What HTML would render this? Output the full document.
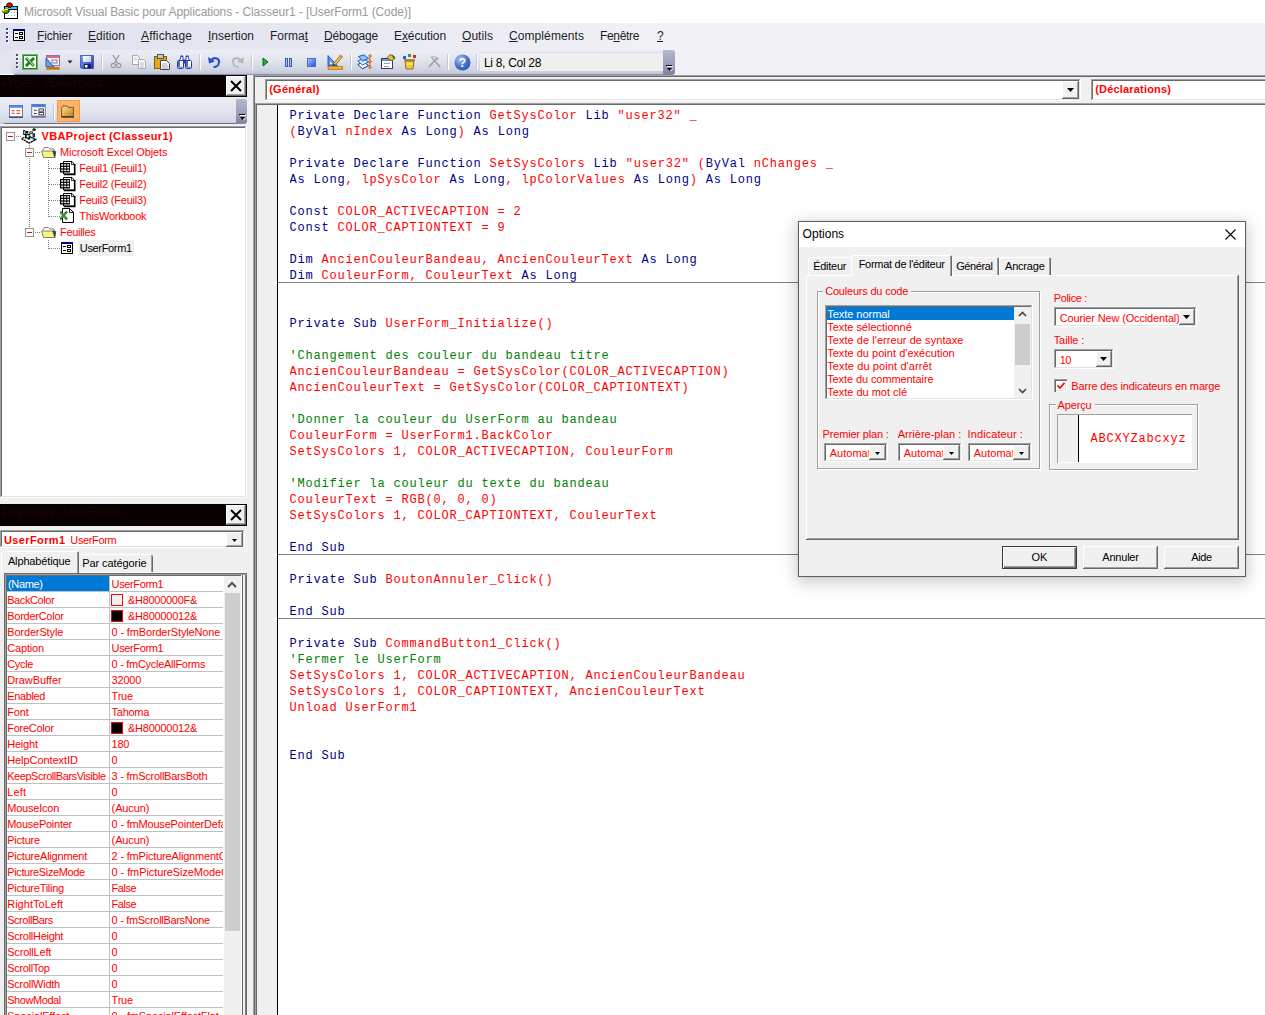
<!DOCTYPE html>
<html><head><meta charset="utf-8"><title>VBA</title>
<style>
html,body{margin:0;padding:0;background:#fff;}
body{width:1265px;height:1015px;overflow:hidden;position:relative;font-family:"Liberation Sans",sans-serif;}
div,svg,span.t{position:absolute;}
span.t{white-space:pre;}
u{text-decoration:underline;text-underline-offset:1px;}
.code{font-family:"Liberation Mono",monospace;font-size:12px;letter-spacing:0.8px;color:#f00;overflow:hidden;}
.cl{left:0;height:16px;line-height:16px;white-space:pre;}
.k{color:#000080}.g{color:#008000}
</style></head>
<body>
<div style="left:0px;top:0px;width:1265px;height:23px;background:#fff;"></div>
<span class="t" style="letter-spacing:-0.095px;left:24px;top:6.14px;font-size:12px;line-height:12px;color:#999;">Microsoft Visual Basic pour Applications - Classeur1 - [UserForm1 (Code)]</span>
<svg style="left:0px;top:0px" width="20" height="20" viewBox="0 0 20 20">
<rect x="4.500" y="6.500" width="13" height="12" fill="#fff" stroke="#000"/>
<rect x="5" y="6" width="12" height="1" fill="#0000a0"/>
<rect x="5" y="7" width="12" height="2" fill="#30d4e8"/>
<rect x="5" y="9" width="12" height="1" fill="#000"/>
<g fill="#b0b0b0"><rect x="11" y="12" width="1" height="1"/><rect x="14" y="12" width="1" height="1"/><rect x="8" y="15" width="1" height="1"/><rect x="11" y="15" width="1" height="1"/><rect x="14" y="15" width="1" height="1"/></g>
<path d="M6.500 5 L8 3 L11 3 L12.700 5 L11 7.300 L8 7.300 Z" fill="#f00000" stroke="#000" stroke-width=".9"/>
<path d="M2 11.500 L5 9 L8 9 L9.500 11 L7.500 13.300 L4.500 13.300 L3.500 12.500 Z" fill="#5a9a10" stroke="#000" stroke-width=".9"/>
<path d="M2.500 11.500 L5.500 9.300 L8 9.300" fill="none" stroke="#f8f000" stroke-width="1.400"/>
</svg>
<div style="left:0px;top:23px;width:1265px;height:27px;background:linear-gradient(90deg,#dfe2ee 0,#e6e8f1 320px,#eeeff5 560px,#f1f1f6 680px,#f1f1f6 100%);"></div>
<div style="left:7px;top:29px;width:2px;height:2px;background:#fff;"></div>
<div style="left:6px;top:28px;width:2px;height:2px;background:#3e3e78;"></div>
<div style="left:7px;top:33px;width:2px;height:2px;background:#fff;"></div>
<div style="left:6px;top:32px;width:2px;height:2px;background:#3e3e78;"></div>
<div style="left:7px;top:37px;width:2px;height:2px;background:#fff;"></div>
<div style="left:6px;top:36px;width:2px;height:2px;background:#3e3e78;"></div>
<div style="left:7px;top:41px;width:2px;height:2px;background:#fff;"></div>
<div style="left:6px;top:40px;width:2px;height:2px;background:#3e3e78;"></div>
<svg style="left:13px;top:29px" width="12" height="12" viewBox="0 0 12 12">
<rect x=".500" y=".500" width="11" height="11" fill="#f4f4f4" stroke="#000"/>
<rect x="0" y="0" width="12" height="2" fill="#000080"/>
<rect x="2" y="4" width="3" height="1" fill="#000"/><rect x="2" y="8" width="3" height="1" fill="#000"/>
<rect x="6.500" y="3.500" width="3" height="2" fill="#fff" stroke="#000"/><rect x="6.500" y="7.500" width="3" height="2" fill="#fff" stroke="#000"/>
</svg>
<span class="t" style="letter-spacing:-0.147px;left:37px;top:29.74px;font-size:12px;line-height:12px;color:#1e1e1e;"><u>F</u>ichier</span>
<span class="t" style="letter-spacing:0.042px;left:88px;top:29.74px;font-size:12px;line-height:12px;color:#1e1e1e;"><u>E</u>dition</span>
<span class="t" style="letter-spacing:0.130px;left:141px;top:29.74px;font-size:12px;line-height:12px;color:#1e1e1e;"><u>A</u>ffichage</span>
<span class="t" style="letter-spacing:-0.005px;left:208px;top:29.74px;font-size:12px;line-height:12px;color:#1e1e1e;"><u>I</u>nsertion</span>
<span class="t" style="letter-spacing:-0.003px;left:270px;top:29.74px;font-size:12px;line-height:12px;color:#1e1e1e;">Forma<u>t</u></span>
<span class="t" style="letter-spacing:-0.174px;left:324px;top:29.74px;font-size:12px;line-height:12px;color:#1e1e1e;"><u>D</u>ébogage</span>
<span class="t" style="letter-spacing:-0.080px;left:394px;top:29.74px;font-size:12px;line-height:12px;color:#1e1e1e;">E<u>x</u>écution</span>
<span class="t" style="letter-spacing:0.052px;left:462px;top:29.74px;font-size:12px;line-height:12px;color:#1e1e1e;"><u>O</u>utils</span>
<span class="t" style="letter-spacing:0.087px;left:509px;top:29.74px;font-size:12px;line-height:12px;color:#1e1e1e;"><u>C</u>ompléments</span>
<span class="t" style="letter-spacing:-0.342px;left:600px;top:29.74px;font-size:12px;line-height:12px;color:#1e1e1e;">Fe<u>n</u>être</span>
<span class="t" style="letter-spacing:-0.688px;left:657px;top:29.74px;font-size:12px;line-height:12px;color:#1e1e1e;"><u>?</u></span>
<div style="left:0px;top:50px;width:1265px;height:25px;background:#f1f1f6;"></div>
<div style="left:0px;top:50px;width:675px;height:24px;background:linear-gradient(180deg,#eceef5 0,#e2e5ee 40%,#cfd3df 85%,#bfc4d4 100%);border-radius:0 3px 3px 0;"></div>
<div style="left:0px;top:50px;width:18px;height:24px;background:linear-gradient(90deg,#e3e5ee 0,#e3e5ee 50%,rgba(227,229,238,0) 100%);"></div>
<div style="left:663px;top:50px;width:12px;height:25px;background:linear-gradient(180deg,#b4b7cf 0,#9a9db8 60%,#7b7fa3 100%);border-radius:0 3px 3px 0;"></div>
<div style="left:14px;top:74px;width:650px;height:1px;background:#8b90b2;"></div>
<div style="left:0px;top:74px;width:14px;height:1px;background:#fff;"></div>
<div style="left:666px;top:65px;width:6px;height:1px;background:#000;"></div>
<div style="left:667px;top:66px;width:6px;height:1px;background:#fff;"></div>
<svg style="left:666px;top:67px" width="8" height="5" viewBox="0 0 8 5"><path d="M1 1h5l-2.5 3z" fill="#000"/><path d="M4.5 4 L7 1.5" stroke="#fff" stroke-width="1"/></svg>
<div style="left:16px;top:54px;width:2px;height:2px;background:#fff;margin:1px 0 0 1px;"></div>
<div style="left:16px;top:54px;width:2px;height:2px;background:#4a4f6a;"></div>
<div style="left:16px;top:58px;width:2px;height:2px;background:#fff;margin:1px 0 0 1px;"></div>
<div style="left:16px;top:58px;width:2px;height:2px;background:#4a4f6a;"></div>
<div style="left:16px;top:62px;width:2px;height:2px;background:#fff;margin:1px 0 0 1px;"></div>
<div style="left:16px;top:62px;width:2px;height:2px;background:#4a4f6a;"></div>
<div style="left:16px;top:66px;width:2px;height:2px;background:#fff;margin:1px 0 0 1px;"></div>
<div style="left:16px;top:66px;width:2px;height:2px;background:#4a4f6a;"></div>
<div style="left:102px;top:54px;width:1px;height:16px;background:#fff;"></div>
<div style="left:101px;top:54px;width:1px;height:16px;background:#c4c8d6;"></div>
<div style="left:200px;top:54px;width:1px;height:16px;background:#fff;"></div>
<div style="left:199px;top:54px;width:1px;height:16px;background:#c4c8d6;"></div>
<div style="left:252px;top:54px;width:1px;height:16px;background:#fff;"></div>
<div style="left:251px;top:54px;width:1px;height:16px;background:#c4c8d6;"></div>
<div style="left:351px;top:54px;width:1px;height:16px;background:#fff;"></div>
<div style="left:350px;top:54px;width:1px;height:16px;background:#c4c8d6;"></div>
<div style="left:448px;top:54px;width:1px;height:16px;background:#fff;"></div>
<div style="left:447px;top:54px;width:1px;height:16px;background:#c4c8d6;"></div>
<div style="left:477px;top:54px;width:1px;height:16px;background:#fff;"></div>
<div style="left:476px;top:54px;width:1px;height:16px;background:#c4c8d6;"></div>
<div style="left:480px;top:52px;width:183px;height:19px;background:#efefef;box-shadow:inset 0 1px 0 #dcdde4;"></div>
<span class="t" style="letter-spacing:-0.309px;left:484px;top:57.44px;font-size:12px;line-height:12px;color:#000;">Li 8, Col 28</span>
<svg style="left:22px;top:54px" width="16" height="16" viewBox="0 0 16 16"><rect x=".500" y=".500" width="15" height="15" fill="#fff" stroke="#0a6a0a" stroke-dasharray="1 1"/><rect x="1.500" y="1.500" width="13" height="13" fill="#f2faf2" stroke="#1a8a1a"/><path d="M4 4 L12 12 M12 4 L4 12" stroke="#1a7a1a" stroke-width="2.800"/><path d="M4.500 3.500 L12.500 12.500" stroke="#fff" stroke-width=".9"/></svg>
<svg style="left:45px;top:54px" width="15" height="16" viewBox="0 0 15 16"><rect x="1.5" y="1.5" width="13" height="10" fill="#f4f4fa" stroke="#9a6ab0"/><rect x="2" y="2" width="12" height="2" fill="#e06a7a"/><path d="M1 4 L1 13 L9 13 Z" fill="#6aa0e8" stroke="#2858b8"/><rect x="7" y="6" width="5" height="3" fill="#fff" stroke="#7a7aa0"/><rect x="1" y="13" width="14" height="3" fill="#d89820"/><path d="M3 13v2M5 13v2M7 13v2M9 13v2M11 13v2M13 13v2" stroke="#7a4a00" stroke-width=".7"/></svg>
<svg style="left:67px;top:60px" width="7" height="4" viewBox="0 0 7 4"><path d="M0.5 0.5h5l-2.5 3z" fill="#222"/></svg>
<svg style="left:80px;top:55px" width="14" height="14" viewBox="0 0 14 14"><defs><linearGradient id="svg1" x1="0" y1="0" x2="1" y2="1"><stop offset="0" stop-color="#7aa8f4"/><stop offset=".5" stop-color="#4a6cd8"/><stop offset="1" stop-color="#2a2a98"/></linearGradient><linearGradient id="svg2" x1="0" y1="0" x2="1" y2="1"><stop offset="0" stop-color="#fff"/><stop offset="1" stop-color="#c8ccd8"/></linearGradient></defs><path d="M.500 .500h13v13h-12l-1-1z" fill="url(#svg1)" stroke="#3a4ab0" stroke-width=".8"/><rect x="3" y="1" width="8" height="6" fill="url(#svg2)"/><rect x="4" y="9" width="7" height="4.500" fill="#1a1a60"/><rect x="5" y="10" width="2.500" height="2.500" fill="#fff"/></svg>
<svg style="left:110px;top:54px" width="12" height="15" viewBox="0 0 12 15"><path d="M3 1 L7.5 9 M9 1 L4.5 9" stroke="#9a9aa0" stroke-width="1.3" fill="none"/><circle cx="3.3" cy="11.5" r="2.1" fill="none" stroke="#9a9aa0" stroke-width="1.2"/><circle cx="8.7" cy="11.5" r="2.1" fill="none" stroke="#9a9aa0" stroke-width="1.2"/></svg>
<svg style="left:132px;top:55px" width="15" height="14" viewBox="0 0 15 14"><path d="M.5 .5h5l2 2v7h-7z" fill="#fafafa" stroke="#a8a8ae"/><path d="M6.5 4.5h5l2 2v7h-7z" fill="#fafafa" stroke="#a8a8ae"/><path d="M8 8h4M8 10h4M8 12h4M2 3h3M2 5h3" stroke="#c0c0c4"/></svg>
<svg style="left:154px;top:54px" width="16" height="16" viewBox="0 0 16 16"><rect x=".5" y="2.5" width="12" height="12" fill="#e0a820" stroke="#8a5a00"/><rect x="3.5" y=".5" width="6" height="4" fill="#c8c8c8" stroke="#555"/><path d="M6.5 6.5h6l3 3v6h-9z" fill="#fff" stroke="#445"/><path d="M8 10h5M8 12h6M8 14h6" stroke="#8a8a9a" stroke-width=".8"/></svg>
<svg style="left:177px;top:55px" width="15" height="14" viewBox="0 0 15 14"><path d="M2.500 5.500 L4 1.500 h2 v4z M12.500 5.500 L11 1.500 h-2 v4z" fill="#fff" stroke="#2a3ab0" stroke-width="1"/><rect x="3.5" y="0.500" width="2.500" height="1.500" fill="#2a3ab0"/><rect x="9" y="0.500" width="2.500" height="1.500" fill="#2a3ab0"/><rect x="0.500" y="5.500" width="6" height="8" rx="1" fill="#fff" stroke="#2a3ab0"/><rect x="8.500" y="5.500" width="6" height="8" rx="1" fill="#fff" stroke="#2a3ab0"/><rect x="6" y="4.500" width="3" height="4" fill="#2a3ab0"/><rect x="1" y="6" width="2" height="7" fill="#4a6ad8"/><rect x="9" y="6" width="2" height="7" fill="#4a6ad8"/><rect x="1" y="11.500" width="5" height="1.500" fill="#8aa0e8"/><rect x="9" y="11.500" width="5" height="1.500" fill="#8aa0e8"/></svg>
<svg style="left:208px;top:55px" width="13" height="13" viewBox="0 0 13 13"><path d="M2.5 6.5 C5 1.5 11.5 2.5 11 7.5 C10.7 10.5 8 12 5.5 12" fill="none" stroke="#2a50c8" stroke-width="2.2"/><path d="M0 2 L1 8.5 L7 6.5 Z" fill="#2a50c8"/></svg>
<svg style="left:231px;top:55px" width="13" height="13" viewBox="0 0 13 13"><path d="M10.5 6.5 C8 1.5 1.5 2.5 2 7.5 C2.3 10.5 5 12 7.5 12" fill="none" stroke="#b4b4bc" stroke-width="1.800"/><path d="M13 2 L12 8.500 L6 6.500 Z" fill="#b4b4bc"/></svg>
<svg style="left:262px;top:57px" width="7" height="10" viewBox="0 0 7 10"><path d="M1 1 L6 5 L1 9 Z" fill="#2aa83a" stroke="#0a6a1a" stroke-width="1"/></svg>
<svg style="left:285px;top:58px" width="7" height="9" viewBox="0 0 7 9"><rect x=".500" y=".500" width="2" height="8" fill="#a8c0f8" stroke="#2a4ac0" stroke-width=".9"/><rect x="4.500" y=".500" width="2" height="8" fill="#a8c0f8" stroke="#2a4ac0" stroke-width=".9"/></svg>
<svg style="left:307px;top:58px" width="9" height="9" viewBox="0 0 9 9"><defs><linearGradient id="sg" x1="0" y1="0" x2="1" y2="1"><stop offset="0" stop-color="#a8c4fa"/><stop offset=".6" stop-color="#5a80e8"/><stop offset="1" stop-color="#2a4ac0"/></linearGradient></defs><rect x=".5" y=".5" width="8" height="8" fill="url(#sg)" stroke="#3a5ac8" stroke-width=".8"/></svg>
<svg style="left:327px;top:54px" width="16" height="16" viewBox="0 0 16 16"><path d="M1 1.500 L1 12 L10.500 12 Z" fill="#5a90e8" stroke="#2050b8" stroke-width=".9"/><path d="M3 7 L3 10 L5.800 10 Z" fill="#e8eefc"/><path d="M6.500 9.500 L13.500 1 L15.500 2.800 L8.500 11 L6 12 Z" fill="#f0c040" stroke="#6a5020" stroke-width=".7"/><path d="M13.500 1 L15.500 2.800 L14.500 4 L12.500 2.200 Z" fill="#f07090"/><path d="M6.500 9.500 L8.500 11 L6 12 Z" fill="#303030"/><rect x="1" y="12.500" width="15" height="3" fill="#e89820" stroke="#b86810" stroke-width=".6"/><path d="M3 13v1.500M5 13v1.500M7 13v1.500M9 13v1.500M11 13v1.500M13 13v1.500" stroke="#fff060" stroke-width=".8"/></svg>
<svg style="left:357px;top:54px" width="16" height="16" viewBox="0 0 16 16"><path d="M12.800 3 V13" stroke="#703800" stroke-width=".7"/><path d="M0.800 10.500 L6.500 8 L11.500 11.500 L5.500 14.800 Z" fill="#fff" stroke="#1a2a88" stroke-width="1"/><path d="M0.800 7 L6.500 4.500 L11.500 8 L5.500 11 Z" fill="#d8ecff" stroke="#2a5ac8" stroke-width="1"/><path d="M1.500 2.500 L7 .8 L11.500 4.500 L5.500 7 Z" fill="#8ac0f8" stroke="#2a5ac8" stroke-width="1"/><path d="M13 .300 l1.700 1.700 l-1.700 1.700 l-1.700 -1.700 z M13 5.800 l1.800 1.800 l-1.800 1.800 l-1.800 -1.800 z M13 11.600 l1.700 1.700 l-1.700 1.700 l-1.700 -1.700 z" fill="#f88a20" stroke="#c05000" stroke-width=".5"/></svg>
<svg style="left:380px;top:54px" width="16" height="16" viewBox="0 0 16 16"><rect x="1.5" y="4.5" width="11" height="10" fill="#fff" stroke="#3a3a5a"/><rect x="2" y="5" width="10" height="2" fill="#7a8ac8"/><path d="M4 9.500h6M4 12.500h5" stroke="#8aa4e0" stroke-width="1"/><path d="M7 4 L10 0.5 L15 3 L12 7 Z" fill="#e8c040" stroke="#6a4a00" stroke-width=".8"/><path d="M12 1 L15 5" stroke="#2a8a3a" stroke-width="1.5"/></svg>
<svg style="left:402px;top:54px" width="16" height="16" viewBox="0 0 16 16"><path d="M3 7h9l-1 8h-7z" fill="#f0c838" stroke="#7a5a00" stroke-width=".8"/><path d="M2 6h11" stroke="#7a5a00" stroke-width="1.2"/><rect x="11" y="1" width="3" height="3" fill="#d82828"/><rect x="6" y="0" width="3" height="3" fill="#2aa040"/><rect x="1" y="2" width="3" height="3" fill="#2a60d0"/><path d="M5 10h5" stroke="#fff8c0" stroke-width="1"/></svg>
<svg style="left:428px;top:55px" width="13" height="13" viewBox="0 0 13 13"><path d="M1 12 L8 4 M12 12 L5 4" stroke="#a0a0a8" stroke-width="1.6"/><path d="M6 1 L11 3 L9 6 Z M2 2 L6 1 L5 5 Z" fill="#b0b0b8"/></svg>
<svg style="left:454px;top:54px" width="17" height="17" viewBox="0 0 17 17"><defs><radialGradient id="hg" cx=".35" cy=".3" r=".8"><stop offset="0" stop-color="#a8c4f4"/><stop offset=".55" stop-color="#4a74d4"/><stop offset="1" stop-color="#2a4cb0"/></radialGradient></defs><circle cx="8.5" cy="8.5" r="8" fill="url(#hg)"/><text x="8.5" y="13" font-family="Liberation Sans" font-weight="bold" font-size="12" fill="#fff" text-anchor="middle">?</text></svg>
<div style="left:0px;top:75px;width:253px;height:940px;background:#f0f0f0;"></div>
<div style="left:0px;top:75px;width:247px;height:22px;background:#0a0000;"></div>
<span class="t" style="letter-spacing:-0.178px;left:2px;top:77.24px;font-size:12px;line-height:12px;color:#170707;">Projet - VBAProject</span>
<div style="left:226px;top:76px;width:20px;height:20px;background:#f0f0f0;box-shadow:inset -1px -1px 0 #696969,inset 1px 1px 0 #fff,inset -2px -2px 0 #a0a0a0;"></div>
<svg style="left:229.5px;top:79.5px" width="12" height="12" viewBox="0 0 12 12"><path d="M1 1 L11 11 M11 1 L1 11" stroke="#000" stroke-width="2" fill="none"/></svg>
<div style="left:0px;top:97px;width:247px;height:27px;background:linear-gradient(180deg,#eceef5 0,#e4e7f0 45%,#d3d7e3 90%,#c4c9d8 100%);border-radius:0 0 3px 0;"></div>
<div style="left:4px;top:123px;width:232px;height:1px;background:#6a7094;"></div>
<div style="left:236px;top:99px;width:11px;height:25px;background:linear-gradient(180deg,#b4b7cf 0,#9a9db8 60%,#7f829f 100%);border-radius:0 3px 3px 0;"></div>
<div style="left:239px;top:114px;width:6px;height:1px;background:#000;"></div>
<div style="left:240px;top:115px;width:6px;height:1px;background:#fff;"></div>
<svg style="left:239px;top:116px" width="8" height="5" viewBox="0 0 8 5"><path d="M1 1h5l-2.5 3z" fill="#000"/><path d="M4.5 4 L7 1.5" stroke="#fff" stroke-width="1"/></svg>
<svg style="left:9px;top:105px" width="14" height="13" viewBox="0 0 15 14"><rect x=".5" y=".5" width="14" height="12" fill="#fff" stroke="#5a6ab8"/><rect x="1" y="1" width="13" height="2" fill="#5a8ae8"/><path d="M3 6h3M3 9h3" stroke="#e85a2a" stroke-width="1.4"/><path d="M8 6h4M8 9h4" stroke="#e85a2a" stroke-width="1.4"/><path d="M0 13.500h15" stroke="#3a3a6a"/></svg>
<svg style="left:31px;top:104px" width="15" height="13.5" viewBox="0 0 16 15"><rect x=".5" y=".5" width="15" height="13" fill="#fff" stroke="#5a6ab8"/><rect x="1" y="1" width="14" height="2.5" fill="#4a7ae0"/><path d="M3 7h3M3 10.500h3" stroke="#333" stroke-width="1.2"/><rect x="8.5" y="5.500" width="5" height="2.500" fill="#fff" stroke="#333"/><rect x="8.5" y="9.500" width="5" height="2.500" fill="#fff" stroke="#333"/><path d="M0 14.500h16" stroke="#3a3a6a"/></svg>
<div style="left:54px;top:105px;width:1px;height:15px;background:#fff;"></div>
<div style="left:53px;top:105px;width:1px;height:15px;background:#c0c4d2;"></div>
<div style="left:57px;top:100px;width:23px;height:22px;background:#fdb469;box-sizing:border-box;border:1px solid #ff9a3c;background-image:radial-gradient(#ffd6a8 35%,transparent 36%);background-size:2px 2px;"></div>
<svg style="left:60px;top:105px" width="16" height="13" viewBox="0 0 16 14"><defs><linearGradient id="fg" x1="0" y1="0" x2="1" y2="1"><stop offset="0" stop-color="#f8e0a0"/><stop offset=".5" stop-color="#e0b050"/><stop offset="1" stop-color="#b88020"/></linearGradient></defs><path d="M1 3.500 L2.500 1 L7 1 L8 2.500 L14 2.500 L14 12.500 L1 12.500 Z" fill="url(#fg)" stroke="#5a4a30" stroke-width=".9"/><path d="M1 13h13.500" stroke="#222" stroke-width="1.2"/></svg>
<div style="left:0px;top:126px;width:247px;height:372px;background:#fff;box-shadow:inset -1px -1px 0 #fff,inset 1px 1px 0 #a0a0a0,inset -2px -2px 0 #e3e3e3,inset 2px 2px 0 #696969;"></div>
<div style="left:16px;top:136px;width:5px;height:1px;background-image:linear-gradient(90deg,#808080 50%,transparent 50%);background-size:2px 1px;"></div>
<div style="left:29px;top:145px;width:1px;height:3px;background-image:linear-gradient(180deg,#808080 50%,transparent 50%);background-size:1px 2px;"></div>
<div style="left:35px;top:152px;width:6px;height:1px;background-image:linear-gradient(90deg,#808080 50%,transparent 50%);background-size:2px 1px;"></div>
<div style="left:29px;top:158px;width:1px;height:70px;background-image:linear-gradient(180deg,#808080 50%,transparent 50%);background-size:1px 2px;"></div>
<div style="left:35px;top:232px;width:6px;height:1px;background-image:linear-gradient(90deg,#808080 50%,transparent 50%);background-size:2px 1px;"></div>
<div style="left:48px;top:160px;width:1px;height:57px;background-image:linear-gradient(180deg,#808080 50%,transparent 50%);background-size:1px 2px;"></div>
<div style="left:49px;top:168px;width:11px;height:1px;background-image:linear-gradient(90deg,#808080 50%,transparent 50%);background-size:2px 1px;"></div>
<div style="left:49px;top:184px;width:11px;height:1px;background-image:linear-gradient(90deg,#808080 50%,transparent 50%);background-size:2px 1px;"></div>
<div style="left:49px;top:200px;width:11px;height:1px;background-image:linear-gradient(90deg,#808080 50%,transparent 50%);background-size:2px 1px;"></div>
<div style="left:49px;top:216px;width:11px;height:1px;background-image:linear-gradient(90deg,#808080 50%,transparent 50%);background-size:2px 1px;"></div>
<div style="left:48px;top:240px;width:1px;height:9px;background-image:linear-gradient(180deg,#808080 50%,transparent 50%);background-size:1px 2px;"></div>
<div style="left:49px;top:248px;width:11px;height:1px;background-image:linear-gradient(90deg,#808080 50%,transparent 50%);background-size:2px 1px;"></div>
<div style="left:6px;top:132px;width:9px;height:9px;background:#fff;box-sizing:border-box;border:1px solid #919191;"><div style="left:1px;top:2.700px;width:5px;height:1.600px;background:#f00"></div></div>
<div style="left:25px;top:148px;width:9px;height:9px;background:#fff;box-sizing:border-box;border:1px solid #919191;"><div style="left:1px;top:2.700px;width:5px;height:1.600px;background:#f00"></div></div>
<div style="left:25px;top:228px;width:9px;height:9px;background:#fff;box-sizing:border-box;border:1px solid #919191;"><div style="left:1px;top:2.700px;width:5px;height:1.600px;background:#f00"></div></div>
<svg style="left:21px;top:128px" width="17" height="16" viewBox="0 0 17 16"><path d="M2.200 2 h2 v1 h3 v3 h2 v5.500 h-2.500 v-1 h-2.700 v-3.500 h-1.800 z" fill="#000"/><rect x="3.200" y="4" width="1" height="2" fill="#fff"/><rect x="5.600" y="7.200" width="2.200" height="2.300" fill="#fff"/><path d="M3 3 L13.500 12.500" stroke="#30d4f4" stroke-width="1.200" stroke-dasharray="1.800 1.300"/><path d="M8.500 8.500 L15 11.500" stroke="#000" stroke-width="1.300"/><path d="M10 10 L13.500 12.300" stroke="#30d4f4" stroke-width="1.100"/><path d="M0.500 10.500 L8 15 L15.500 11.300" fill="none" stroke="#000" stroke-width="1.400" stroke-dasharray="2.200 .5"/><path d="M1.200 10 L3.500 9.500" stroke="#000" stroke-width="1"/><rect x="11.800" y=".800" width="2.600" height="1.800" rx=".5" fill="#008a00" stroke="#000" stroke-width=".8"/><rect x="8.800" y="3.800" width="2.600" height="1.600" fill="#f8f000" stroke="#101030" stroke-width=".8"/><rect x="12" y="5.800" width="1.600" height="3" fill="#f000f0" stroke="#002000" stroke-width=".8"/></svg>
<span class="t" style="letter-spacing:0.364px;left:41.5px;top:131.09px;font-size:11px;line-height:11px;color:#f00;font-weight:bold;">VBAProject (Classeur1)</span>
<svg style="left:41px;top:146px" width="16" height="13" viewBox="0 0 16 13"><path d="M1.500 4.500 L3.500 1.500 L7.500 1.500 L9 3 L13 3 L13 5" fill="#fff" stroke="#808080"/><path d="M0.500 5 L11.500 5 L13.800 11.500 L2.500 11.500 Z" fill="#f8f878" stroke="#808080"/><path d="M11.500 5 L14.800 5.500 L13.800 11.500" fill="#484848" stroke="#202020" stroke-width=".7"/></svg>
<span class="t" style="letter-spacing:-0.087px;left:60px;top:147.09px;font-size:11px;line-height:11px;color:#f00;">Microsoft Excel Objets</span>
<svg style="left:60px;top:160px" width="16" height="16" viewBox="0 0 16 16"><path d="M3.500 1.500 L12 1.500 L14.500 4.500 L14.500 14 L3.500 14 Z" fill="#fff" stroke="#000"/><path d="M14.700 4 V14.500 H4" fill="none" stroke="#000" stroke-width="1.600"/><path d="M11.500 1.500 V4.500 H14.500" fill="none" stroke="#000" stroke-width=".8"/><rect x="0" y="3" width="10" height="9.500" fill="#000"/><g fill="#fff"><rect x="1.200" y="4.200" width="2" height="1.500"/><rect x="4.200" y="4.200" width="2" height="1.500"/><rect x="7.200" y="4.200" width="2" height="1.500"/><rect x="1.200" y="6.900" width="2" height="1.500"/><rect x="4.200" y="6.900" width="2" height="1.500"/><rect x="7.200" y="6.900" width="2" height="1.500"/><rect x="1.200" y="9.600" width="2" height="1.500"/><rect x="4.200" y="9.600" width="2" height="1.500"/><rect x="7.200" y="9.600" width="2" height="1.500"/></g></svg>
<span class="t" style="letter-spacing:-0.207px;left:79.2px;top:163.09px;font-size:11px;line-height:11px;color:#f00;">Feuil1 (Feuil1)</span>
<svg style="left:60px;top:176px" width="16" height="16" viewBox="0 0 16 16"><path d="M3.500 1.500 L12 1.500 L14.500 4.500 L14.500 14 L3.500 14 Z" fill="#fff" stroke="#000"/><path d="M14.700 4 V14.500 H4" fill="none" stroke="#000" stroke-width="1.600"/><path d="M11.500 1.500 V4.500 H14.500" fill="none" stroke="#000" stroke-width=".8"/><rect x="0" y="3" width="10" height="9.500" fill="#000"/><g fill="#fff"><rect x="1.200" y="4.200" width="2" height="1.500"/><rect x="4.200" y="4.200" width="2" height="1.500"/><rect x="7.200" y="4.200" width="2" height="1.500"/><rect x="1.200" y="6.900" width="2" height="1.500"/><rect x="4.200" y="6.900" width="2" height="1.500"/><rect x="7.200" y="6.900" width="2" height="1.500"/><rect x="1.200" y="9.600" width="2" height="1.500"/><rect x="4.200" y="9.600" width="2" height="1.500"/><rect x="7.200" y="9.600" width="2" height="1.500"/></g></svg>
<span class="t" style="letter-spacing:-0.207px;left:79.2px;top:179.09px;font-size:11px;line-height:11px;color:#f00;">Feuil2 (Feuil2)</span>
<svg style="left:60px;top:192px" width="16" height="16" viewBox="0 0 16 16"><path d="M3.500 1.500 L12 1.500 L14.500 4.500 L14.500 14 L3.500 14 Z" fill="#fff" stroke="#000"/><path d="M14.700 4 V14.500 H4" fill="none" stroke="#000" stroke-width="1.600"/><path d="M11.500 1.500 V4.500 H14.500" fill="none" stroke="#000" stroke-width=".8"/><rect x="0" y="3" width="10" height="9.500" fill="#000"/><g fill="#fff"><rect x="1.200" y="4.200" width="2" height="1.500"/><rect x="4.200" y="4.200" width="2" height="1.500"/><rect x="7.200" y="4.200" width="2" height="1.500"/><rect x="1.200" y="6.900" width="2" height="1.500"/><rect x="4.200" y="6.900" width="2" height="1.500"/><rect x="7.200" y="6.900" width="2" height="1.500"/><rect x="1.200" y="9.600" width="2" height="1.500"/><rect x="4.200" y="9.600" width="2" height="1.500"/><rect x="7.200" y="9.600" width="2" height="1.500"/></g></svg>
<span class="t" style="letter-spacing:-0.207px;left:79.2px;top:195.09px;font-size:11px;line-height:11px;color:#f00;">Feuil3 (Feuil3)</span>
<svg style="left:60px;top:208px" width="16" height="16" viewBox="0 0 16 16"><path d="M2.500 0.500 L9.500 0.500 L13.500 4.500 L13.500 14.500 L2.500 14.500 Z" fill="#fff" stroke="#000"/><path d="M9.500 0.500 V4.500 H13.500" fill="none" stroke="#000" stroke-width=".9"/><path d="M0 3.500 L7 11.500 M7 3.500 L0 11.500" stroke="#1a7a1a" stroke-width="2.400"/><path d="M0 3.500 L7 11.500 M7 3.500 L0 11.500" stroke="#a8dca8" stroke-width=".8" stroke-dasharray="1 1"/></svg>
<span class="t" style="letter-spacing:-0.242px;left:79.2px;top:211.09px;font-size:11px;line-height:11px;color:#f00;">ThisWorkbook</span>
<svg style="left:41px;top:226px" width="16" height="13" viewBox="0 0 16 13"><path d="M1.500 4.500 L3.500 1.500 L7.500 1.500 L9 3 L13 3 L13 5" fill="#fff" stroke="#808080"/><path d="M0.500 5 L11.500 5 L13.800 11.500 L2.500 11.500 Z" fill="#f8f878" stroke="#808080"/><path d="M11.500 5 L14.800 5.500 L13.800 11.500" fill="#484848" stroke="#202020" stroke-width=".7"/></svg>
<span class="t" style="letter-spacing:-0.313px;left:60px;top:227.09px;font-size:11px;line-height:11px;color:#f00;">Feuilles</span>
<svg style="left:61px;top:242px" width="12" height="12" viewBox="0 0 12 12"><rect x=".500" y=".500" width="11" height="11" fill="#f4f4f4" stroke="#000"/><rect x="0" y="0" width="12" height="2" fill="#000080"/><rect x="2" y="4" width="3" height="1" fill="#000"/><rect x="2" y="8" width="3" height="1" fill="#000"/><rect x="6.500" y="3.500" width="3" height="2" fill="#fff" stroke="#000"/><rect x="6.500" y="7.500" width="3" height="2" fill="#fff" stroke="#000"/></svg>
<div style="left:78px;top:240px;width:56px;height:16px;background:#f0f0f0;"></div>
<span class="t" style="letter-spacing:-0.335px;left:79.8px;top:243.09px;font-size:11px;line-height:11px;color:#000;">UserForm1</span>
<div style="left:0px;top:504px;width:247px;height:22px;background:#0a0000;"></div>
<span class="t" style="letter-spacing:-0.267px;left:1.5px;top:505.54px;font-size:12px;line-height:12px;color:#170707;">Propriétés - UserForm1</span>
<div style="left:226px;top:505px;width:20px;height:20px;background:#f0f0f0;box-shadow:inset -1px -1px 0 #696969,inset 1px 1px 0 #fff,inset -2px -2px 0 #a0a0a0;"></div>
<svg style="left:229.5px;top:508.5px" width="12" height="12" viewBox="0 0 12 12"><path d="M1 1 L11 11 M11 1 L1 11" stroke="#000" stroke-width="2" fill="none"/></svg>
<div style="left:0px;top:530px;width:245px;height:18px;background:#fff;box-shadow:inset -1px -1px 0 #fff,inset 1px 1px 0 #a0a0a0,inset -2px -2px 0 #e3e3e3,inset 2px 2px 0 #696969;"></div>
<div style="left:226px;top:532px;width:17px;height:15px;background:#f0f0f0;box-shadow:inset -1px -1px 0 #696969,inset 1px 1px 0 #fff,inset -2px -2px 0 #a0a0a0;"></div>
<svg style="left:232px;top:539px" width="5" height="3" viewBox="0 0 5 3"><path d="M0 0h5l-2.500 3z" fill="#000"/></svg>
<span class="t" style="letter-spacing:0.380px;left:4px;top:534.99px;font-size:11px;line-height:11px;color:#f00;font-weight:bold;">UserForm1</span>
<span class="t" style="letter-spacing:-0.361px;left:70.3px;top:534.99px;font-size:11px;line-height:11px;color:#f00;">UserForm</span>
<div style="left:1px;top:572px;width:246px;height:1px;background:#fff;"></div>
<div style="left:78px;top:554px;width:75px;height:18px;background:#f0f0f0;box-shadow:inset 0 1px 0 #fff,inset -1px 0 0 #696969,inset -2px 0 0 #a0a0a0;border-radius:2px 2px 0 0;"></div>
<div style="left:1px;top:551px;width:78px;height:22px;background:#f0f0f0;box-shadow:inset 1px 1px 0 #fff,inset -1px 0 0 #696969,inset -2px 0 0 #a0a0a0;border-radius:2px 2px 0 0;"></div>
<span class="t" style="letter-spacing:-0.136px;left:7.9px;top:555.79px;font-size:11px;line-height:11px;color:#000;">Alphabétique</span>
<span class="t" style="letter-spacing:-0.088px;left:82.3px;top:557.79px;font-size:11px;line-height:11px;color:#000;">Par catégorie</span>
<div style="left:4px;top:573px;width:243px;height:442px;background:#fff;box-shadow:inset 1px 1px 0 #696969,inset 2px 2px 0 #a0a0a0,inset 3px 3px 0 #696969;"></div>
<div style="left:241px;top:575px;width:6px;height:440px;background:#f0f0f0;box-shadow:inset 1px 0 0 #fff, inset 2px 0 0 #696969,inset -1px 0 0 #696969,inset -2px 0 0 #808080;"></div>
<div style="left:224px;top:576px;width:17px;height:439px;background:#f0f0f0;"></div>
<div style="left:224.5px;top:593px;width:15px;height:338px;background:#cdcdcd;"></div>
<svg style="left:227px;top:581px" width="10" height="7" viewBox="0 0 10 7"><path d="M1 6 L5 2 L9 6" fill="none" stroke="#505050" stroke-width="2"/></svg>
<div style="left:7px;top:591px;width:216px;height:1px;background:#c0c0c0;"></div>
<div style="left:7px;top:576px;width:102px;height:15px;background:#0078d7;"></div>
<span class="t" style="letter-spacing:-0.362px;left:8px;top:578.99px;font-size:11px;line-height:11px;color:#fff;">(Name)</span>
<div style="left:110.6px;top:576px;width:112.4px;height:15px;overflow:hidden;"><span class="t" style="letter-spacing:-0.368px;left:1px;top:2.99px;font-size:11px;line-height:11px;color:#f00;">UserForm1</span></div>
<div style="left:7px;top:607px;width:216px;height:1px;background:#c0c0c0;"></div>
<span class="t" style="letter-spacing:-0.417px;left:7.2px;top:594.99px;font-size:11px;line-height:11px;color:#f00;">BackColor</span>
<div style="left:111px;top:594px;width:12px;height:12px;background:#f0f0f0;box-sizing:border-box;border:1px solid #f00;"></div>
<div style="left:127px;top:592px;width:96px;height:15px;overflow:hidden;"><span class="t" style="letter-spacing:-0.288px;left:1px;top:2.99px;font-size:11px;line-height:11px;color:#f00;">&amp;H8000000F&amp;</span></div>
<div style="left:7px;top:623px;width:216px;height:1px;background:#c0c0c0;"></div>
<span class="t" style="letter-spacing:-0.256px;left:7.2px;top:610.99px;font-size:11px;line-height:11px;color:#f00;">BorderColor</span>
<div style="left:111px;top:610px;width:12px;height:12px;background:#000;box-sizing:border-box;border:1px solid #f00;"></div>
<div style="left:127px;top:608px;width:96px;height:15px;overflow:hidden;"><span class="t" style="letter-spacing:-0.233px;left:1px;top:2.99px;font-size:11px;line-height:11px;color:#f00;">&amp;H80000012&amp;</span></div>
<div style="left:7px;top:639px;width:216px;height:1px;background:#c0c0c0;"></div>
<span class="t" style="letter-spacing:-0.135px;left:7.2px;top:626.99px;font-size:11px;line-height:11px;color:#f00;">BorderStyle</span>
<div style="left:110.6px;top:624px;width:112.4px;height:15px;overflow:hidden;"><span class="t" style="letter-spacing:-0.157px;left:1px;top:2.99px;font-size:11px;line-height:11px;color:#f00;">0 - fmBorderStyleNone</span></div>
<div style="left:7px;top:655px;width:216px;height:1px;background:#c0c0c0;"></div>
<span class="t" style="letter-spacing:-0.160px;left:7.2px;top:642.99px;font-size:11px;line-height:11px;color:#f00;">Caption</span>
<div style="left:110.6px;top:640px;width:112.4px;height:15px;overflow:hidden;"><span class="t" style="letter-spacing:-0.368px;left:1px;top:2.99px;font-size:11px;line-height:11px;color:#f00;">UserForm1</span></div>
<div style="left:7px;top:671px;width:216px;height:1px;background:#c0c0c0;"></div>
<span class="t" style="letter-spacing:-0.303px;left:7.2px;top:658.99px;font-size:11px;line-height:11px;color:#f00;">Cycle</span>
<div style="left:110.6px;top:656px;width:112.4px;height:15px;overflow:hidden;"><span class="t" style="letter-spacing:-0.290px;left:1px;top:2.99px;font-size:11px;line-height:11px;color:#f00;">0 - fmCycleAllForms</span></div>
<div style="left:7px;top:687px;width:216px;height:1px;background:#c0c0c0;"></div>
<span class="t" style="letter-spacing:-0.043px;left:7.2px;top:674.99px;font-size:11px;line-height:11px;color:#f00;">DrawBuffer</span>
<div style="left:110.6px;top:672px;width:112.4px;height:15px;overflow:hidden;"><span class="t" style="letter-spacing:-0.199px;left:1px;top:2.99px;font-size:11px;line-height:11px;color:#f00;">32000</span></div>
<div style="left:7px;top:703px;width:216px;height:1px;background:#c0c0c0;"></div>
<span class="t" style="letter-spacing:-0.368px;left:7.2px;top:690.99px;font-size:11px;line-height:11px;color:#f00;">Enabled</span>
<div style="left:110.6px;top:688px;width:112.4px;height:15px;overflow:hidden;"><span class="t" style="letter-spacing:-0.230px;left:1px;top:2.99px;font-size:11px;line-height:11px;color:#f00;">True</span></div>
<div style="left:7px;top:719px;width:216px;height:1px;background:#c0c0c0;"></div>
<span class="t" style="letter-spacing:-0.104px;left:7.2px;top:706.99px;font-size:11px;line-height:11px;color:#f00;">Font</span>
<div style="left:110.6px;top:704px;width:112.4px;height:15px;overflow:hidden;"><span class="t" style="letter-spacing:-0.290px;left:1px;top:2.99px;font-size:11px;line-height:11px;color:#f00;">Tahoma</span></div>
<div style="left:7px;top:735px;width:216px;height:1px;background:#c0c0c0;"></div>
<span class="t" style="letter-spacing:-0.256px;left:7.2px;top:722.99px;font-size:11px;line-height:11px;color:#f00;">ForeColor</span>
<div style="left:111px;top:722px;width:12px;height:12px;background:#000;box-sizing:border-box;border:1px solid #f00;"></div>
<div style="left:127px;top:720px;width:96px;height:15px;overflow:hidden;"><span class="t" style="letter-spacing:-0.233px;left:1px;top:2.99px;font-size:11px;line-height:11px;color:#f00;">&amp;H80000012&amp;</span></div>
<div style="left:7px;top:751px;width:216px;height:1px;background:#c0c0c0;"></div>
<span class="t" style="letter-spacing:-0.199px;left:7.2px;top:738.99px;font-size:11px;line-height:11px;color:#f00;">Height</span>
<div style="left:110.6px;top:736px;width:112.4px;height:15px;overflow:hidden;"><span class="t" style="letter-spacing:-0.286px;left:1px;top:2.99px;font-size:11px;line-height:11px;color:#f00;">180</span></div>
<div style="left:7px;top:767px;width:216px;height:1px;background:#c0c0c0;"></div>
<span class="t" style="letter-spacing:-0.073px;left:7.2px;top:754.99px;font-size:11px;line-height:11px;color:#f00;">HelpContextID</span>
<div style="left:110.6px;top:752px;width:112.4px;height:15px;overflow:hidden;"><span class="t" style="letter-spacing:-0.625px;left:1px;top:2.99px;font-size:11px;line-height:11px;color:#f00;">0</span></div>
<div style="left:7px;top:783px;width:216px;height:1px;background:#c0c0c0;"></div>
<span class="t" style="letter-spacing:-0.454px;left:7.2px;top:770.99px;font-size:11px;line-height:11px;color:#f00;">KeepScrollBarsVisible</span>
<div style="left:110.6px;top:768px;width:112.4px;height:15px;overflow:hidden;"><span class="t" style="letter-spacing:-0.259px;left:1px;top:2.99px;font-size:11px;line-height:11px;color:#f00;">3 - fmScrollBarsBoth</span></div>
<div style="left:7px;top:799px;width:216px;height:1px;background:#c0c0c0;"></div>
<span class="t" style="letter-spacing:0.185px;left:7.2px;top:786.99px;font-size:11px;line-height:11px;color:#f00;">Left</span>
<div style="left:110.6px;top:784px;width:112.4px;height:15px;overflow:hidden;"><span class="t" style="letter-spacing:-0.625px;left:1px;top:2.99px;font-size:11px;line-height:11px;color:#f00;">0</span></div>
<div style="left:7px;top:815px;width:216px;height:1px;background:#c0c0c0;"></div>
<span class="t" style="letter-spacing:-0.201px;left:7.2px;top:802.99px;font-size:11px;line-height:11px;color:#f00;">MouseIcon</span>
<div style="left:110.6px;top:800px;width:112.4px;height:15px;overflow:hidden;"><span class="t" style="letter-spacing:-0.119px;left:1px;top:2.99px;font-size:11px;line-height:11px;color:#f00;">(Aucun)</span></div>
<div style="left:7px;top:831px;width:216px;height:1px;background:#c0c0c0;"></div>
<span class="t" style="letter-spacing:-0.256px;left:7.2px;top:818.99px;font-size:11px;line-height:11px;color:#f00;">MousePointer</span>
<div style="left:110.6px;top:816px;width:112.4px;height:15px;overflow:hidden;"><span class="t" style="letter-spacing:-0.194px;left:1px;top:2.99px;font-size:11px;line-height:11px;color:#f00;">0 - fmMousePointerDefault</span></div>
<div style="left:7px;top:847px;width:216px;height:1px;background:#c0c0c0;"></div>
<span class="t" style="letter-spacing:-0.207px;left:7.2px;top:834.99px;font-size:11px;line-height:11px;color:#f00;">Picture</span>
<div style="left:110.6px;top:832px;width:112.4px;height:15px;overflow:hidden;"><span class="t" style="letter-spacing:-0.119px;left:1px;top:2.99px;font-size:11px;line-height:11px;color:#f00;">(Aucun)</span></div>
<div style="left:7px;top:863px;width:216px;height:1px;background:#c0c0c0;"></div>
<span class="t" style="letter-spacing:-0.204px;left:7.2px;top:850.99px;font-size:11px;line-height:11px;color:#f00;">PictureAlignment</span>
<div style="left:110.6px;top:848px;width:112.4px;height:15px;overflow:hidden;"><span class="t" style="letter-spacing:-0.189px;left:1px;top:2.99px;font-size:11px;line-height:11px;color:#f00;">2 - fmPictureAlignmentCenter</span></div>
<div style="left:7px;top:879px;width:216px;height:1px;background:#c0c0c0;"></div>
<span class="t" style="letter-spacing:-0.364px;left:7.2px;top:866.99px;font-size:11px;line-height:11px;color:#f00;">PictureSizeMode</span>
<div style="left:110.6px;top:864px;width:112.4px;height:15px;overflow:hidden;"><span class="t" style="letter-spacing:-0.089px;left:1px;top:2.99px;font-size:11px;line-height:11px;color:#f00;">0 - fmPictureSizeModeClip</span></div>
<div style="left:7px;top:895px;width:216px;height:1px;background:#c0c0c0;"></div>
<span class="t" style="letter-spacing:-0.256px;left:7.2px;top:882.99px;font-size:11px;line-height:11px;color:#f00;">PictureTiling</span>
<div style="left:110.6px;top:880px;width:112.4px;height:15px;overflow:hidden;"><span class="t" style="letter-spacing:-0.481px;left:1px;top:2.99px;font-size:11px;line-height:11px;color:#f00;">False</span></div>
<div style="left:7px;top:911px;width:216px;height:1px;background:#c0c0c0;"></div>
<span class="t" style="letter-spacing:0.022px;left:7.2px;top:898.99px;font-size:11px;line-height:11px;color:#f00;">RightToLeft</span>
<div style="left:110.6px;top:896px;width:112.4px;height:15px;overflow:hidden;"><span class="t" style="letter-spacing:-0.481px;left:1px;top:2.99px;font-size:11px;line-height:11px;color:#f00;">False</span></div>
<div style="left:7px;top:927px;width:216px;height:1px;background:#c0c0c0;"></div>
<span class="t" style="letter-spacing:-0.452px;left:7.2px;top:914.99px;font-size:11px;line-height:11px;color:#f00;">ScrollBars</span>
<div style="left:110.6px;top:912px;width:112.4px;height:15px;overflow:hidden;"><span class="t" style="letter-spacing:-0.317px;left:1px;top:2.99px;font-size:11px;line-height:11px;color:#f00;">0 - fmScrollBarsNone</span></div>
<div style="left:7px;top:943px;width:216px;height:1px;background:#c0c0c0;"></div>
<span class="t" style="letter-spacing:-0.284px;left:7.2px;top:930.99px;font-size:11px;line-height:11px;color:#f00;">ScrollHeight</span>
<div style="left:110.6px;top:928px;width:112.4px;height:15px;overflow:hidden;"><span class="t" style="letter-spacing:-0.625px;left:1px;top:2.99px;font-size:11px;line-height:11px;color:#f00;">0</span></div>
<div style="left:7px;top:959px;width:216px;height:1px;background:#c0c0c0;"></div>
<span class="t" style="letter-spacing:-0.186px;left:7.2px;top:946.99px;font-size:11px;line-height:11px;color:#f00;">ScrollLeft</span>
<div style="left:110.6px;top:944px;width:112.4px;height:15px;overflow:hidden;"><span class="t" style="letter-spacing:-0.625px;left:1px;top:2.99px;font-size:11px;line-height:11px;color:#f00;">0</span></div>
<div style="left:7px;top:975px;width:216px;height:1px;background:#c0c0c0;"></div>
<span class="t" style="letter-spacing:-0.317px;left:7.2px;top:962.99px;font-size:11px;line-height:11px;color:#f00;">ScrollTop</span>
<div style="left:110.6px;top:960px;width:112.4px;height:15px;overflow:hidden;"><span class="t" style="letter-spacing:-0.625px;left:1px;top:2.99px;font-size:11px;line-height:11px;color:#f00;">0</span></div>
<div style="left:7px;top:991px;width:216px;height:1px;background:#c0c0c0;"></div>
<span class="t" style="letter-spacing:-0.266px;left:7.2px;top:978.99px;font-size:11px;line-height:11px;color:#f00;">ScrollWidth</span>
<div style="left:110.6px;top:976px;width:112.4px;height:15px;overflow:hidden;"><span class="t" style="letter-spacing:-0.625px;left:1px;top:2.99px;font-size:11px;line-height:11px;color:#f00;">0</span></div>
<div style="left:7px;top:1007px;width:216px;height:1px;background:#c0c0c0;"></div>
<span class="t" style="letter-spacing:-0.432px;left:7.2px;top:994.99px;font-size:11px;line-height:11px;color:#f00;">ShowModal</span>
<div style="left:110.6px;top:992px;width:112.4px;height:15px;overflow:hidden;"><span class="t" style="letter-spacing:-0.230px;left:1px;top:2.99px;font-size:11px;line-height:11px;color:#f00;">True</span></div>
<div style="left:7px;top:1023px;width:216px;height:1px;background:#c0c0c0;"></div>
<span class="t" style="letter-spacing:-0.155px;left:7.2px;top:1010.99px;font-size:11px;line-height:11px;color:#f00;">SpecialEffect</span>
<div style="left:110.6px;top:1008px;width:112.4px;height:15px;overflow:hidden;"><span class="t" style="letter-spacing:-0.150px;left:1px;top:2.99px;font-size:11px;line-height:11px;color:#f00;">0 - fmSpecialEffectFlat</span></div>
<div style="left:109px;top:576px;width:1px;height:439px;background:#c0c0c0;"></div>
<div style="left:253px;top:75px;width:1012px;height:940px;background:#f0f0f0;box-shadow:inset 1px 1px 0 #a0a0a0,inset 2px 2px 0 #696969;"></div>
<div style="left:265px;top:79px;width:816px;height:22px;background:#fff;box-shadow:inset -1px -1px 0 #fff,inset 1px 1px 0 #a0a0a0,inset -2px -2px 0 #e3e3e3,inset 2px 2px 0 #696969;"></div>
<div style="left:1062px;top:81px;width:17px;height:18px;background:#f0f0f0;box-shadow:inset -1px -1px 0 #696969,inset 1px 1px 0 #fff,inset -2px -2px 0 #a0a0a0;"></div>
<svg style="left:1067px;top:88px" width="7" height="4" viewBox="0 0 7 4"><path d="M0 0h7l-3.500 4z" fill="#000"/></svg>
<span class="t" style="letter-spacing:0.245px;left:269.2px;top:84.39px;font-size:11px;line-height:11px;color:#f00;font-weight:bold;">(Général)</span>
<div style="left:1091px;top:79px;width:190px;height:22px;background:#fff;box-shadow:inset -1px -1px 0 #fff,inset 1px 1px 0 #a0a0a0,inset -2px -2px 0 #e3e3e3,inset 2px 2px 0 #696969;"></div>
<span class="t" style="letter-spacing:0.189px;left:1095.2px;top:84.39px;font-size:11px;line-height:11px;color:#f00;font-weight:bold;">(Déclarations)</span>
<div style="left:255px;top:103px;width:1010px;height:912px;background:#fff;box-shadow:inset 1px 1px 0 #a0a0a0,inset 2px 2px 0 #696969;"></div>
<div style="left:257px;top:105px;width:20px;height:910px;background:#f0f0f0;"></div>
<div style="left:277px;top:105px;width:1px;height:910px;background:#000;"></div>
<div style="left:278px;top:282px;width:987px;height:1px;background:#808080;"></div>
<div style="left:278px;top:554px;width:987px;height:1px;background:#808080;"></div>
<div style="left:278px;top:618px;width:987px;height:1px;background:#808080;"></div>
<div class="code" style="left:289.5px;top:2px;width:976px;height:1013px;"><div class="cl" style="top:106px"><span class="k">Private</span> <span class="k">Declare</span> <span class="k">Function</span> GetSysColor <span class="k">Lib</span> "user32" _</div><div class="cl" style="top:122px">(<span class="k">ByVal</span> nIndex <span class="k">As</span> <span class="k">Long</span>) <span class="k">As</span> <span class="k">Long</span></div><div class="cl" style="top:154px"><span class="k">Private</span> <span class="k">Declare</span> <span class="k">Function</span> SetSysColors <span class="k">Lib</span> "user32" (<span class="k">ByVal</span> nChanges _</div><div class="cl" style="top:170px"><span class="k">As</span> <span class="k">Long</span>, lpSysColor <span class="k">As</span> <span class="k">Long</span>, lpColorValues <span class="k">As</span> <span class="k">Long</span>) <span class="k">As</span> <span class="k">Long</span></div><div class="cl" style="top:202px"><span class="k">Const</span> COLOR_ACTIVECAPTION = 2</div><div class="cl" style="top:218px"><span class="k">Const</span> COLOR_CAPTIONTEXT = 9</div><div class="cl" style="top:250px"><span class="k">Dim</span> AncienCouleurBandeau, AncienCouleurText <span class="k">As</span> <span class="k">Long</span></div><div class="cl" style="top:266px"><span class="k">Dim</span> CouleurForm, CouleurText <span class="k">As</span> <span class="k">Long</span></div><div class="cl" style="top:314px"><span class="k">Private</span> <span class="k">Sub</span> UserForm_Initialize()</div><div class="cl" style="top:346px"><span class="g">'Changement des couleur du bandeau titre</span></div><div class="cl" style="top:362px">AncienCouleurBandeau = GetSysColor(COLOR_ACTIVECAPTION)</div><div class="cl" style="top:378px">AncienCouleurText = GetSysColor(COLOR_CAPTIONTEXT)</div><div class="cl" style="top:410px"><span class="g">'Donner la couleur du UserForm au bandeau</span></div><div class="cl" style="top:426px">CouleurForm = UserForm1.BackColor</div><div class="cl" style="top:442px">SetSysColors 1, COLOR_ACTIVECAPTION, CouleurForm</div><div class="cl" style="top:474px"><span class="g">'Modifier la couleur du texte du bandeau</span></div><div class="cl" style="top:490px">CouleurText = RGB(0, 0, 0)</div><div class="cl" style="top:506px">SetSysColors 1, COLOR_CAPTIONTEXT, CouleurText</div><div class="cl" style="top:538px"><span class="k">End</span> <span class="k">Sub</span></div><div class="cl" style="top:570px"><span class="k">Private</span> <span class="k">Sub</span> BoutonAnnuler_Click()</div><div class="cl" style="top:602px"><span class="k">End</span> <span class="k">Sub</span></div><div class="cl" style="top:634px"><span class="k">Private</span> <span class="k">Sub</span> CommandButton1_Click()</div><div class="cl" style="top:650px"><span class="g">'Fermer le UserForm</span></div><div class="cl" style="top:666px">SetSysColors 1, COLOR_ACTIVECAPTION, AncienCouleurBandeau</div><div class="cl" style="top:682px">SetSysColors 1, COLOR_CAPTIONTEXT, AncienCouleurText</div><div class="cl" style="top:698px">Unload UserForm1</div><div class="cl" style="top:746px"><span class="k">End</span> <span class="k">Sub</span></div></div>
<div style="left:798px;top:221px;width:448px;height:356px;background:#f0f0f0;box-sizing:border-box;border:1px solid #5e5e5e;box-shadow:0 4px 15px 2px rgba(0,0,0,.20),0 0 2px rgba(0,0,0,.12);"></div>
<div style="left:799px;top:222px;width:446px;height:25px;background:#fff;"></div>
<span class="t" style="letter-spacing:0.020px;left:802.6px;top:227.54px;font-size:12px;line-height:12px;color:#000;">Options</span>
<svg style="left:1225px;top:229px" width="11" height="11" viewBox="0 0 11 11"><path d="M.5 .5 L10.5 10.5 M10.5 .5 L.5 10.5" stroke="#000" stroke-width="1.1" fill="none"/></svg>
<div style="left:806px;top:275px;width:433px;height:265px;background:#f0f0f0;box-shadow:inset -1px -1px 0 #696969,inset 1px 1px 0 #fff,inset -2px -2px 0 #a0a0a0;"></div>
<div style="left:808px;top:257px;width:46px;height:18px;background:#f0f0f0;box-shadow:inset 1px 1px 0 #fff,inset -1px 0 0 #696969,inset -2px 0 0 #a0a0a0;border-radius:2px 2px 0 0;"></div>
<div style="left:952px;top:257px;width:47px;height:18px;background:#f0f0f0;box-shadow:inset 1px 1px 0 #fff,inset -1px 0 0 #696969,inset -2px 0 0 #a0a0a0;border-radius:2px 2px 0 0;"></div>
<div style="left:999px;top:257px;width:52px;height:18px;background:#f0f0f0;box-shadow:inset 1px 1px 0 #fff,inset -1px 0 0 #696969,inset -2px 0 0 #a0a0a0;border-radius:2px 2px 0 0;"></div>
<div style="left:851px;top:255px;width:101px;height:21px;background:#f0f0f0;box-shadow:inset 1px 1px 0 #fff,inset -1px 0 0 #696969,inset -2px 0 0 #a0a0a0;border-radius:2px 2px 0 0;"></div>
<div style="left:852px;top:275px;width:98px;height:1px;background:#f0f0f0;"></div>
<span class="t" style="letter-spacing:-0.266px;left:813.2px;top:260.99px;font-size:11px;line-height:11px;color:#000;">Éditeur</span>
<span class="t" style="letter-spacing:-0.283px;left:858.7px;top:259.09px;font-size:11px;line-height:11px;color:#000;">Format de l'éditeur</span>
<span class="t" style="letter-spacing:-0.406px;left:956.2px;top:260.99px;font-size:11px;line-height:11px;color:#000;">Général</span>
<span class="t" style="letter-spacing:-0.198px;left:1005px;top:260.99px;font-size:11px;line-height:11px;color:#000;">Ancrage</span>
<div style="left:817px;top:291px;width:223px;height:178px;box-sizing:border-box;border:1px solid #a0a0a0;box-shadow:1px 1px 0 #fff,inset 1px 1px 0 #fff;"></div>
<div style="left:823.2px;top:285px;width:88px;height:13px;background:#f0f0f0;"></div>
<span class="t" style="letter-spacing:-0.202px;left:825.2px;top:286.29px;font-size:11px;line-height:11px;color:#f00;">Couleurs du code</span>
<div style="left:825px;top:305px;width:208px;height:95px;background:#fff;box-shadow:inset -1px -1px 0 #fff,inset 1px 1px 0 #a0a0a0,inset -2px -2px 0 #e3e3e3,inset 2px 2px 0 #696969;"></div>
<div style="left:827px;top:307px;width:187px;height:13px;background:#0078d7;"></div>
<span class="t" style="letter-spacing:-0.032px;left:827.2px;top:309.09px;font-size:11px;line-height:11px;color:#fff;">Texte normal</span>
<span class="t" style="letter-spacing:-0.024px;left:827.2px;top:322.09px;font-size:11px;line-height:11px;color:#f00;">Texte sélectionné</span>
<span class="t" style="letter-spacing:0.050px;left:827.2px;top:335.09px;font-size:11px;line-height:11px;color:#f00;">Texte de l'erreur de syntaxe</span>
<span class="t" style="letter-spacing:0.028px;left:827.2px;top:348.09px;font-size:11px;line-height:11px;color:#f00;">Texte du point d'exécution</span>
<span class="t" style="letter-spacing:0.110px;left:827.2px;top:361.09px;font-size:11px;line-height:11px;color:#f00;">Texte du point d'arrêt</span>
<span class="t" style="letter-spacing:-0.096px;left:827.2px;top:374.09px;font-size:11px;line-height:11px;color:#f00;">Texte du commentaire</span>
<span class="t" style="letter-spacing:-0.018px;left:827.2px;top:387.09px;font-size:11px;line-height:11px;color:#f00;">Texte du mot clé</span>
<div style="left:1014px;top:307px;width:17px;height:91px;background:#f0f0f0;"></div>
<div style="left:1015px;top:324px;width:15px;height:41px;background:#cdcdcd;"></div>
<svg style="left:1018px;top:311px" width="9" height="6" viewBox="0 0 9 6"><path d="M1 5 L4.500 1.500 L8 5" fill="none" stroke="#484848" stroke-width="1.700"/></svg>
<svg style="left:1018px;top:388px" width="9" height="6" viewBox="0 0 9 6"><path d="M1 1 L4.500 4.500 L8 1" fill="none" stroke="#484848" stroke-width="1.700"/></svg>
<span class="t" style="letter-spacing:-0.177px;left:822.6px;top:429.09px;font-size:11px;line-height:11px;color:#f00;">Premier plan :</span>
<span class="t" style="letter-spacing:0.002px;left:897.7px;top:429.09px;font-size:11px;line-height:11px;color:#f00;">Arrière-plan :</span>
<span class="t" style="letter-spacing:0.082px;left:967.6px;top:429.09px;font-size:11px;line-height:11px;color:#f00;">Indicateur :</span>
<div style="left:824px;top:443px;width:64px;height:19px;background:#fff;box-shadow:inset -1px -1px 0 #fff,inset 1px 1px 0 #a0a0a0,inset -2px -2px 0 #e3e3e3,inset 2px 2px 0 #696969;"></div>
<div style="left:869px;top:445px;width:17px;height:15px;background:#f0f0f0;box-shadow:inset -1px -1px 0 #696969,inset 1px 1px 0 #fff,inset -2px -2px 0 #a0a0a0;"></div>
<svg style="left:875px;top:452px" width="5" height="3" viewBox="0 0 5 3"><path d="M0 0h5l-2.500 3z" fill="#000"/></svg>
<div style="left:826px;top:445px;width:43px;height:15px;overflow:hidden;"><span class="t" style="letter-spacing:0.021px;left:3.7px;top:2.79px;font-size:11px;line-height:11px;color:#f00;">Automatique</span></div>
<div style="left:898px;top:443px;width:64px;height:19px;background:#fff;box-shadow:inset -1px -1px 0 #fff,inset 1px 1px 0 #a0a0a0,inset -2px -2px 0 #e3e3e3,inset 2px 2px 0 #696969;"></div>
<div style="left:943px;top:445px;width:17px;height:15px;background:#f0f0f0;box-shadow:inset -1px -1px 0 #696969,inset 1px 1px 0 #fff,inset -2px -2px 0 #a0a0a0;"></div>
<svg style="left:949px;top:452px" width="5" height="3" viewBox="0 0 5 3"><path d="M0 0h5l-2.500 3z" fill="#000"/></svg>
<div style="left:900px;top:445px;width:43px;height:15px;overflow:hidden;"><span class="t" style="letter-spacing:0.021px;left:3.7px;top:2.79px;font-size:11px;line-height:11px;color:#f00;">Automatique</span></div>
<div style="left:968px;top:443px;width:64px;height:19px;background:#fff;box-shadow:inset -1px -1px 0 #fff,inset 1px 1px 0 #a0a0a0,inset -2px -2px 0 #e3e3e3,inset 2px 2px 0 #696969;"></div>
<div style="left:1013px;top:445px;width:17px;height:15px;background:#f0f0f0;box-shadow:inset -1px -1px 0 #696969,inset 1px 1px 0 #fff,inset -2px -2px 0 #a0a0a0;"></div>
<svg style="left:1019px;top:452px" width="5" height="3" viewBox="0 0 5 3"><path d="M0 0h5l-2.500 3z" fill="#000"/></svg>
<div style="left:970px;top:445px;width:43px;height:15px;overflow:hidden;"><span class="t" style="letter-spacing:0.021px;left:3.7px;top:2.79px;font-size:11px;line-height:11px;color:#f00;">Automatique</span></div>
<span class="t" style="letter-spacing:-0.347px;left:1053.7px;top:293.39px;font-size:11px;line-height:11px;color:#f00;">Police :</span>
<div style="left:1054px;top:307px;width:143px;height:20px;background:#fff;box-shadow:inset -1px -1px 0 #fff,inset 1px 1px 0 #a0a0a0,inset -2px -2px 0 #e3e3e3,inset 2px 2px 0 #696969;"></div>
<div style="left:1179px;top:309px;width:16px;height:16px;background:#f0f0f0;box-shadow:inset -1px -1px 0 #696969,inset 1px 1px 0 #fff,inset -2px -2px 0 #a0a0a0;"></div>
<svg style="left:1183px;top:315px" width="7" height="4" viewBox="0 0 7 4"><path d="M0 0h7l-3.500 4z" fill="#000"/></svg>
<div style="left:1056px;top:309px;width:123px;height:16px;overflow:hidden;"><span class="t" style="letter-spacing:-0.145px;left:3.7px;top:3.79px;font-size:11px;line-height:11px;color:#f00;">Courier New (Occidental)</span></div>
<span class="t" style="letter-spacing:-0.073px;left:1053.7px;top:335.09px;font-size:11px;line-height:11px;color:#f00;">Taille :</span>
<div style="left:1054px;top:349px;width:60px;height:20px;background:#fff;box-shadow:inset -1px -1px 0 #fff,inset 1px 1px 0 #a0a0a0,inset -2px -2px 0 #e3e3e3,inset 2px 2px 0 #696969;"></div>
<div style="left:1096px;top:351px;width:16px;height:16px;background:#f0f0f0;box-shadow:inset -1px -1px 0 #696969,inset 1px 1px 0 #fff,inset -2px -2px 0 #a0a0a0;"></div>
<svg style="left:1100px;top:357px" width="7" height="4" viewBox="0 0 7 4"><path d="M0 0h7l-3.500 4z" fill="#000"/></svg>
<div style="left:1056px;top:351px;width:40px;height:16px;overflow:hidden;"><span class="t" style="letter-spacing:-0.625px;left:3.7px;top:3.79px;font-size:11px;line-height:11px;color:#f00;">10</span></div>
<div style="left:1054px;top:379px;width:13px;height:13px;background:#fff;box-shadow:inset 1px 1px 0 #a0a0a0,inset 2px 2px 0 #696969,inset -1px -1px 0 #fff,inset -2px -2px 0 #e3e3e3;"></div>
<svg style="left:1057px;top:382px" width="8" height="8" viewBox="0 0 8 8"><path d="M.5 3.500 L3 6 L7.500 .800" fill="none" stroke="#f00" stroke-width="1.7"/></svg>
<span class="t" style="letter-spacing:-0.149px;left:1071.3px;top:380.99px;font-size:11px;line-height:11px;color:#f00;">Barre des indicateurs en marge</span>
<div style="left:1049px;top:404px;width:149px;height:66px;box-sizing:border-box;border:1px solid #a0a0a0;box-shadow:1px 1px 0 #fff,inset 1px 1px 0 #fff;"></div>
<div style="left:1055.6px;top:398px;width:39px;height:13px;background:#f0f0f0;"></div>
<span class="t" style="letter-spacing:-0.143px;left:1057.6px;top:400.39px;font-size:11px;line-height:11px;color:#f00;">Aperçu</span>
<div style="left:1057px;top:414px;width:135px;height:49px;background:#fff;box-shadow:inset 1px 1px 0 #a0a0a0,inset -1px -1px 0 #fff;"></div>
<div style="left:1058px;top:415px;width:20px;height:47px;background:#f0f0f0;"></div>
<div style="left:1078px;top:415px;width:1px;height:47px;background:#000;"></div>
<span class="t" style="left:1090.5px;top:433.00px;font-size:12px;line-height:12px;color:#f00;font-family:'Liberation Mono', monospace;letter-spacing:0.8px;">ABCXYZabcxyz</span>
<div style="left:1002px;top:546px;width:75px;height:23px;background:#f0f0f0;box-shadow:inset 0 0 0 1px #3a3a3a,inset 2px 2px 0 #fff,inset -2px -2px 0 #696969,inset -3px -3px 0 #a0a0a0;"></div>
<span class="t" style="letter-spacing:0.047px;left:1031.5px;top:552.39px;font-size:11px;line-height:11px;color:#000;">OK</span>
<div style="left:1083px;top:546px;width:75px;height:23px;background:#f0f0f0;box-shadow:inset -1px -1px 0 #696969,inset 1px 1px 0 #fff,inset -2px -2px 0 #a0a0a0;"></div>
<span class="t" style="letter-spacing:-0.203px;left:1102.25px;top:552.39px;font-size:11px;line-height:11px;color:#000;">Annuler</span>
<div style="left:1164px;top:546px;width:75px;height:23px;background:#f0f0f0;box-shadow:inset -1px -1px 0 #696969,inset 1px 1px 0 #fff,inset -2px -2px 0 #a0a0a0;"></div>
<span class="t" style="letter-spacing:-0.383px;left:1191.25px;top:552.39px;font-size:11px;line-height:11px;color:#000;">Aide</span>
</body></html>
